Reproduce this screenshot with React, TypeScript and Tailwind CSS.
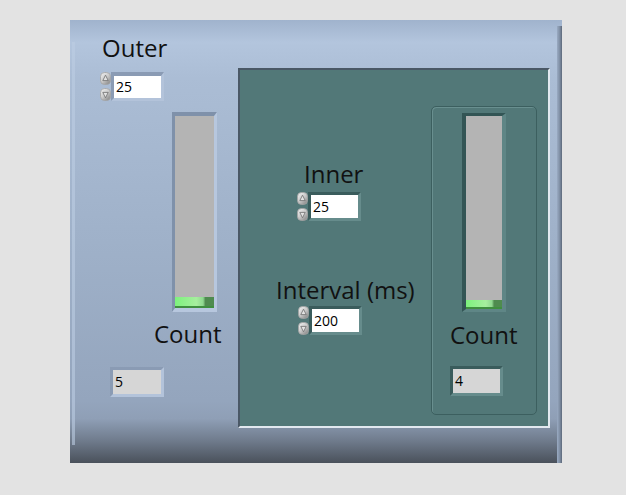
import React from "react";

function Arrow({ dir }: { dir: "up" | "down" }) {
  return (
    <svg width="11" height="13" viewBox="0 0 11 13" className="block">
      <defs>
        <linearGradient id={`ag-${dir}`} x1="0" y1="0" x2="0.8" y2="1">
          <stop offset="0" stopColor="#f4f4f4" />
          <stop offset="0.55" stopColor="#c9c9c9" />
          <stop offset="1" stopColor="#8a8a8a" />
        </linearGradient>
      </defs>
      <rect x="0.5" y="0.5" width="10" height="12" rx="4" fill={`url(#ag-${dir})`} stroke="#a3a3a3" strokeWidth="0.8" />
      {dir === "up" ? (
        <path d="M5.5 3.2 L8.2 8.6 L2.8 8.6 Z" fill="#e2e2e2" stroke="#6e6e6e" strokeWidth="0.8" />
      ) : (
        <path d="M5.5 9.8 L8.2 4.4 L2.8 4.4 Z" fill="#e2e2e2" stroke="#6e6e6e" strokeWidth="0.8" />
      )}
    </svg>
  );
}

function Numeric({ value, teal }: { value: string; teal?: boolean }) {
  return (
    <div className="flex items-start">
      <div className="flex flex-col gap-[3px] w-[11px]">
        <Arrow dir="up" />
        <Arrow dir="down" />
      </div>
      <div
        className={
          teal
            ? "w-[53px] h-[29px] border-solid border-t-[3px] border-l-[3px] border-r-[3px] border-b-[3px] border-t-[#3a5c5c] border-l-[#3a5c5c] border-r-[#668c8c] border-b-[#668c8c] bg-white flex items-center pl-[2px]"
            : "w-[53px] h-[29px] border-solid border-t-[4px] border-l-[3px] border-r-[3px] border-b-[3px] border-t-[#8a9bb4] border-l-[#8a9bb4] border-r-[#b3c3da] border-b-[#b3c3da] bg-white flex items-center pl-[2px]"
        }
      >
        <span className="text-[14px] leading-none text-black">{value}</span>
      </div>
    </div>
  );
}

function Indicator({ value, teal }: { value: string; teal?: boolean }) {
  return (
    <div
      className={
        teal
          ? "w-[53px] h-[30px] border-solid border-[3px] border-t-[#3a5c5c] border-l-[#3a5c5c] border-r-[#668c8c] border-b-[#668c8c] bg-[#d6d6d6] flex items-center pl-[2px]"
          : "w-[54px] h-[30px] border-solid border-[3px] border-t-[#8a9bb4] border-l-[#8a9bb4] border-r-[#b3c3da] border-b-[#b3c3da] bg-[#d6d6d6] flex items-center pl-[2px]"
      }
    >
      <span className="text-[14px] leading-none text-black">{value}</span>
    </div>
  );
}

function Tank({ teal, fill }: { teal?: boolean; fill: number }) {
  return (
    <div
      className={
        teal
          ? "w-[44px] h-[199px] border-solid border-t-[3px] border-l-[4px] border-r-[4px] border-b-[3px] border-t-[#335555] border-l-[#335555] border-r-[#5f8686] border-b-[#5f8686] bg-[#b4b4b4] flex flex-col justify-end"
          : "w-[45px] h-[200px] border-solid border-t-[4px] border-l-[3px] border-r-[3px] border-b-[4px] border-t-[#7f91aa] border-l-[#7f91aa] border-r-[#b7c7de] border-b-[#b7c7de] bg-[#b4b4b4] flex flex-col justify-end"
      }
    >
      <div
        className="w-full bg-[linear-gradient(to_right,#7df27d_0%,#a6ee9e_55%,#8fd88f_72%,#4f8b4f_78%,#4f8b4f_100%)] border-b-[2px] border-[#3f8f3f]"
        style={{ height: fill }}
      />
    </div>
  );
}

function Label({ text }: { text: string }) {
  return <div className="text-[24px] leading-none text-[#111] whitespace-nowrap">{text}</div>;
}

export default function App() {
  return (
    <div className="w-[626px] h-[495px] bg-[#e3e3e3] pt-[20px] pl-[70px] font-['Open_Sans',sans-serif]">
      <div className="relative w-[492px] h-[443px] flex bg-[linear-gradient(to_bottom,#a0b3cd_0%,#b3c5dd_5%,#abbdd5_13%,#9fb1c9_50%,#94a5bd_86%,#8f9fb6_90%,#6f7b8c_95%,#4a515b_100%)]">
        <div className="absolute left-[2px] top-[22px] bottom-[18px] w-[3px] bg-[#bccde3]/60" />
        <div className="absolute right-0 top-[6px] bottom-0 w-[5px] bg-[linear-gradient(to_right,#9aabc3,#7c8ba0_60%,#5c687a)]" />

        {/* left column */}
        <div className="w-[168px] flex flex-col">
          <div className="mt-[16px] ml-[32px]">
            <Label text="Outer" />
          </div>
          <div className="mt-[12px] ml-[30px]">
            <Numeric value="25" />
          </div>
          <div className="mt-[11px] ml-[102px]">
            <Tank fill={11} />
          </div>
          <div className="mt-[10px] ml-[84px]">
            <Label text="Count" />
          </div>
          <div className="mt-[21px] ml-[40px]">
            <Indicator value="5" />
          </div>
        </div>

        {/* inner teal panel */}
        <div className="mt-[48px] w-[312px] h-[360px] border-solid border-[2px] border-t-[#4a5866] border-l-[#4a5866] border-r-[#e2e9f0] border-b-[#e2e9f0] bg-[#527878] flex">
          <div className="w-[191px] flex flex-col">
            <div className="mt-[92px] ml-[64px]">
              <Label text="Inner" />
            </div>
            <div className="mt-[6px] ml-[57px]">
              <Numeric value="25" teal />
            </div>
            <div className="mt-[57px] ml-[36px]">
              <Label text="Interval (ms)" />
            </div>
            <div className="mt-[4px] ml-[58px]">
              <Numeric value="200" teal />
            </div>
          </div>
          <div className="mt-[36px] w-[106px] h-[309px] rounded-[5px] border border-[#3c5f5f] shadow-[inset_1px_1px_0_#698f8f] flex flex-col">
            <div className="mt-[6px] ml-[30px]">
              <Tank teal fill={9} />
            </div>
            <div className="mt-[11px] ml-[18px]">
              <Label text="Count" />
            </div>
            <div className="mt-[19px] ml-[18px]">
              <Indicator value="4" teal />
            </div>
          </div>
        </div>
      </div>
    </div>
  );
}
